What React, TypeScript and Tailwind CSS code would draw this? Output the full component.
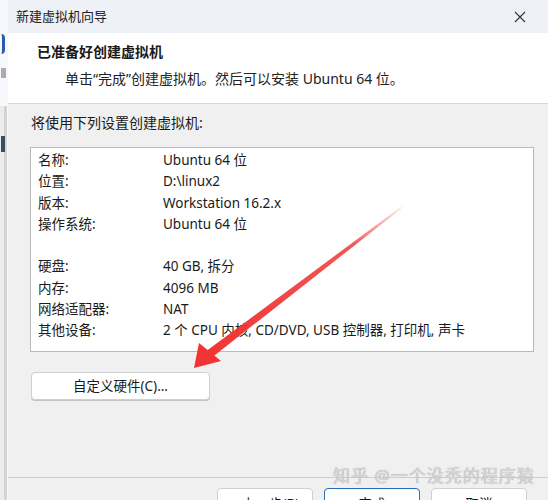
const font = { fontFamily: '"Noto Sans", "Noto Sans CJK SC", sans-serif' };

const rows: [string, string][] = [
  ["名称:", "Ubuntu 64 位"],
  ["位置:", "D:\\linux2"],
  ["版本:", "Workstation 16.2.x"],
  ["操作系统:", "Ubuntu 64 位"],
  ["", ""],
  ["硬盘:", "40 GB, 拆分"],
  ["内存:", "4096 MB"],
  ["网络适配器:", "NAT"],
  ["其他设备:", "2 个 CPU 内核, CD/DVD, USB 控制器, 打印机, 声卡"],
];

function Arrow() {
  return (
    <svg className="absolute left-0 top-0 pointer-events-none" width="548" height="500">
      <defs>
        <linearGradient id="tail" x1="402" y1="207" x2="205" y2="356" gradientUnits="userSpaceOnUse">
          <stop offset="0" stopColor="#f04a4a" stopOpacity="0.1" />
          <stop offset="0.25" stopColor="#ee3a3a" stopOpacity="0.85" />
          <stop offset="1" stopColor="#f03434" />
        </linearGradient>
      </defs>
      <polygon points="402,206 401,209 210,359 205,352" fill="url(#tail)" />
      <polygon points="194,368 199,343 221,361" fill="#f03434" />
    </svg>
  );
}

export default function App() {
  return (
    <div className="relative w-[548px] h-[500px] overflow-hidden flex bg-[#f0f0f0] text-[#1a1a1a]" style={font}>
      {/* window behind */}
      <div className="w-[8px] h-full shrink-0 bg-[#f6f8fb] flex flex-col">
        <div className="mt-[34px] ml-[1px] w-[4px] h-[20px] rounded-r-full border-r-[3px] border-[#2d5aa8]" />
        <div className="mt-[14px] ml-[1px] w-[5px] h-[10px] bg-[#7a7a7a] opacity-60" />
        <div className="mt-[28px] w-[7px] flex-1 border-r-[3px] border-[#d4d4d4] bg-[#ececec] flex flex-col">
          <div className="mt-[30px] ml-[1px] w-[4px] h-[16px] bg-[#3b4a6b]" />
        </div>
      </div>

      <div className="flex-1 flex flex-col">
        {/* title bar */}
        <div className="h-[33px] shrink-0 bg-[#eef1f6] flex items-center justify-between pl-[8px] pr-[22px]">
          <span className="text-[13px] text-[#222]">新建虚拟机向导</span>
          <svg width="12" height="12" viewBox="0 0 12 12">
            <path d="M1 1 L11 11 M11 1 L1 11" stroke="#333" strokeWidth="1.1" />
          </svg>
        </div>

        {/* header */}
        <div className="h-[71px] shrink-0 bg-white border-b border-[#d8d8d8] flex flex-col">
          <div className="pt-[9px] pl-[29px] text-[14px] font-bold leading-[20px]">已准备好创建虚拟机</div>
          <div className="pt-[7px] pl-[57px] text-[14px] leading-[20px] text-[#222]">
            单击“完成”创建虚拟机。然后可以安装 Ubuntu 64 位。
          </div>
        </div>

        {/* body */}
        <div className="h-[373px] shrink-0 flex flex-col">
          <div className="pt-[9px] pl-[23px] text-[14px] leading-[20px]">将使用下列设置创建虚拟机:</div>
          <div className="mt-[14px] ml-[22px] w-[504px] h-[205px] bg-white border border-[#b9b9b9] pt-[2px] pl-[7px]">
            {rows.map(([k, v], i) => (
              <div key={i} className="flex text-[13.5px] leading-[21.25px] h-[21.25px]">
                <span className="w-[125px]">{k}</span>
                <span>{v}</span>
              </div>
            ))}
          </div>
          <button className="mt-[20px] ml-[23px] w-[179px] h-[28px] bg-white border border-[#d0d0d0] rounded-[4px] text-[13.5px] text-[#1a1a1a] shadow-[0_1px_0_#c4c4c4]">
            自定义硬件(C)...
          </button>
        </div>

        {/* footer */}
        <div className="shrink-0 border-t border-[#cfcfcf] pt-[10px] flex pl-[209px] gap-[11px]">
          <button className="w-[96px] h-[28px] bg-white border border-[#d0d0d0] rounded-[4px] text-[13.5px] pt-[4px] leading-[20px] self-start">&lt; 上一步(B)</button>
          <button className="w-[96px] h-[28px] bg-white border border-[#2a6cb8] rounded-[4px] text-[13.5px] pt-[4px] leading-[20px] self-start">完成</button>
          <button className="w-[96px] h-[28px] bg-white border border-[#d0d0d0] rounded-[4px] text-[13.5px] pt-[4px] leading-[20px] self-start">取消</button>
        </div>
      </div>

      <Arrow />
      <div className="absolute left-[333px] top-[464px] text-[17px] leading-[24px] text-[#d6d6d6] tracking-[1px] [text-shadow:0_0_1px_#9a9a9a]">
        知乎 @一个没秃的程序猿
      </div>
    </div>
  );
}
